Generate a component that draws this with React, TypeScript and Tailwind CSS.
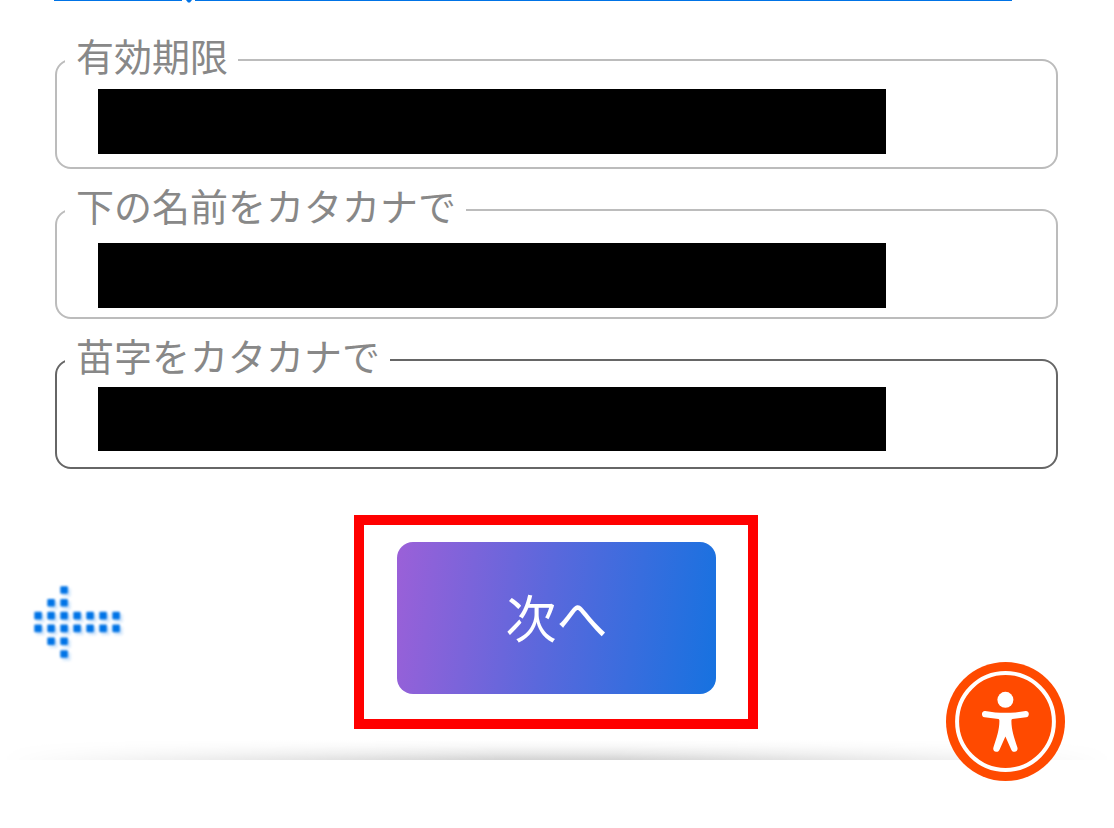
import { useState } from "react";

const fields = [
  {
    id: "expiry",
    label: "有効期限",
    border: "border-[#bcbcbc]",
    mask: "top-[5px] h-[65px]",
  },
  {
    id: "first-name",
    label: "下の名前をカタカナで",
    border: "border-[#bcbcbc]",
    mask: "top-[9px] h-[65px]",
  },
  {
    id: "last-name",
    label: "苗字をカタカナで",
    border: "border-[#666666]",
    mask: "top-[3px] h-[64px]",
  },
];

// [column, row] of every dot in the back arrow
const arrowDots = [
  [2, 0],
  [1, 1], [2, 1],
  [0, 2], [1, 2], [2, 2], [3, 2], [4, 2], [5, 2], [6, 2],
  [0, 3], [1, 3], [2, 3], [3, 3], [4, 3], [5, 3], [6, 3],
  [1, 4], [2, 4],
  [2, 5],
];

function BackArrow() {
  return (
    <svg width="88" height="76" viewBox="0 0 88 76" className="overflow-visible">
      <defs>
        <filter id="dot-soft" x="-10%" y="-10%" width="120%" height="120%">
          <feGaussianBlur stdDeviation="1.2" />
        </filter>
        <filter id="dot-shadow" x="-10%" y="-10%" width="120%" height="125%">
          <feGaussianBlur stdDeviation="1.8" />
        </filter>
      </defs>
      <g fill="#0a78e6" opacity="0.2" filter="url(#dot-shadow)">
        {arrowDots.map(([c, r]) => (
          <rect key={`${c}-${r}`} x={c * 13 + 1.5} y={r * 12.8 + 4.5} width="8" height="8" />
        ))}
      </g>
      <g fill="#0073e6" filter="url(#dot-soft)">
        {arrowDots.map(([c, r]) => (
          <rect key={`${c}-${r}`} x={c * 13 - 0.7} y={r * 12.8 + 2.2} width="7.6" height="7.6" rx="1" />
        ))}
      </g>
    </svg>
  );
}

function AccessibilityIcon() {
  return (
    <svg viewBox="0 0 119 119" className="w-full h-full">
      <circle cx="59.5" cy="59.5" r="59.5" fill="#ff4a00" />
      <circle cx="59.5" cy="59.5" r="48.4" fill="none" stroke="#fff" strokeWidth="4" />
      <circle cx="59.4" cy="37.8" r="8" fill="#fff" />
      <path
        fill="#fff"
        d="M39.2 48.9C46 50.2 52.5 50.8 59.4 50.8C66.3 50.8 72.8 50.2 79.6 48.9C83.6 48.5 84 54.6 80.2 55.3L66.4 57C65.6 57.2 65.4 58 65.4 59C65.4 68 68.2 76 71.4 85.4C72.6 89.4 67.2 91.6 65.4 88L59.4 74.4L53.4 88C51.6 91.6 46.2 89.4 47.4 85.4C50.6 76 53.4 68 53.4 59C53.4 58 53.2 57.2 52.4 57L38.6 55.3C34.8 54.6 35.2 48.5 39.2 48.9Z"
      />
    </svg>
  );
}

export default function App() {
  const [values, setValues] = useState<Record<string, string>>({});

  return (
    <main className="min-h-screen bg-white font-['Noto_Sans_CJK_JP',sans-serif]">
      {/* Underline of the link above the form */}
      <div className="flex items-start h-9 pl-[54px] pr-[102px]">
        <span className="w-32 h-px bg-[#0073e6]" />
        <svg width="13" height="3" viewBox="0 0 13 3">
          <path d="M4 0h6L8 2.5H6z" fill="#0073e6" />
        </svg>
        <span className="flex-1 h-px bg-[#0073e6]" />
      </div>

      <form onSubmit={(e) => e.preventDefault()}>
        <div className="flex flex-col gap-[17px] pl-[55px] pr-14">
          {fields.map((field) => (
            <fieldset
              key={field.id}
              className={`min-w-0 px-2 border-2 rounded-2xl ${field.border}`}
            >
              <legend className="pl-[11px] pr-2.5 pb-2.5 text-[38px] leading-[38px] text-[#888888]">
                <label htmlFor={field.id} className="block">
                  {field.label}
                </label>
              </legend>
              <div className="relative">
                <input
                  id={field.id}
                  type="text"
                  value={values[field.id] ?? ""}
                  onChange={(e) => setValues({ ...values, [field.id]: e.target.value })}
                  className="block w-full h-[83px] px-8 text-4xl bg-transparent outline-none"
                />
                <div className={`absolute left-[33px] right-[162px] bg-black ${field.mask}`} />
              </div>
            </fieldset>
          ))}
        </div>

        <div className="grid grid-cols-[1fr_auto_1fr] items-center mt-[46px] pl-[35px] pr-[37px]">
          <button type="button" aria-label="戻る" className="justify-self-start">
            <BackArrow />
          </button>
          <div className="pl-[33px] pr-8 pt-[17px] pb-[25px] border-10 border-[#ff0000]">
            <button
              type="submit"
              className="block w-[319px] h-38 pb-1 rounded-2xl bg-[linear-gradient(97deg,#9b60d8_0%,#5a68dc_47%,#1672e0_100%)] text-white text-[51px] leading-none"
            >
              次へ
            </button>
          </div>
        </div>
      </form>

      {/* Soft shadow that closes the card */}
      <div className="h-5 mt-[11px] bg-[linear-gradient(to_top,#d4d4d4_0%,#d9d9d9_10%,#e9e9e9_35%,#f8f8f8_70%,#ffffff_100%)] mask-[linear-gradient(to_right,transparent,black_45%,black_55%,transparent)]" />

      <button
        type="button"
        aria-label="アクセシビリティ"
        className="fixed right-[49px] bottom-[47px] size-[119px] rounded-full"
      >
        <AccessibilityIcon />
      </button>
    </main>
  );
}
